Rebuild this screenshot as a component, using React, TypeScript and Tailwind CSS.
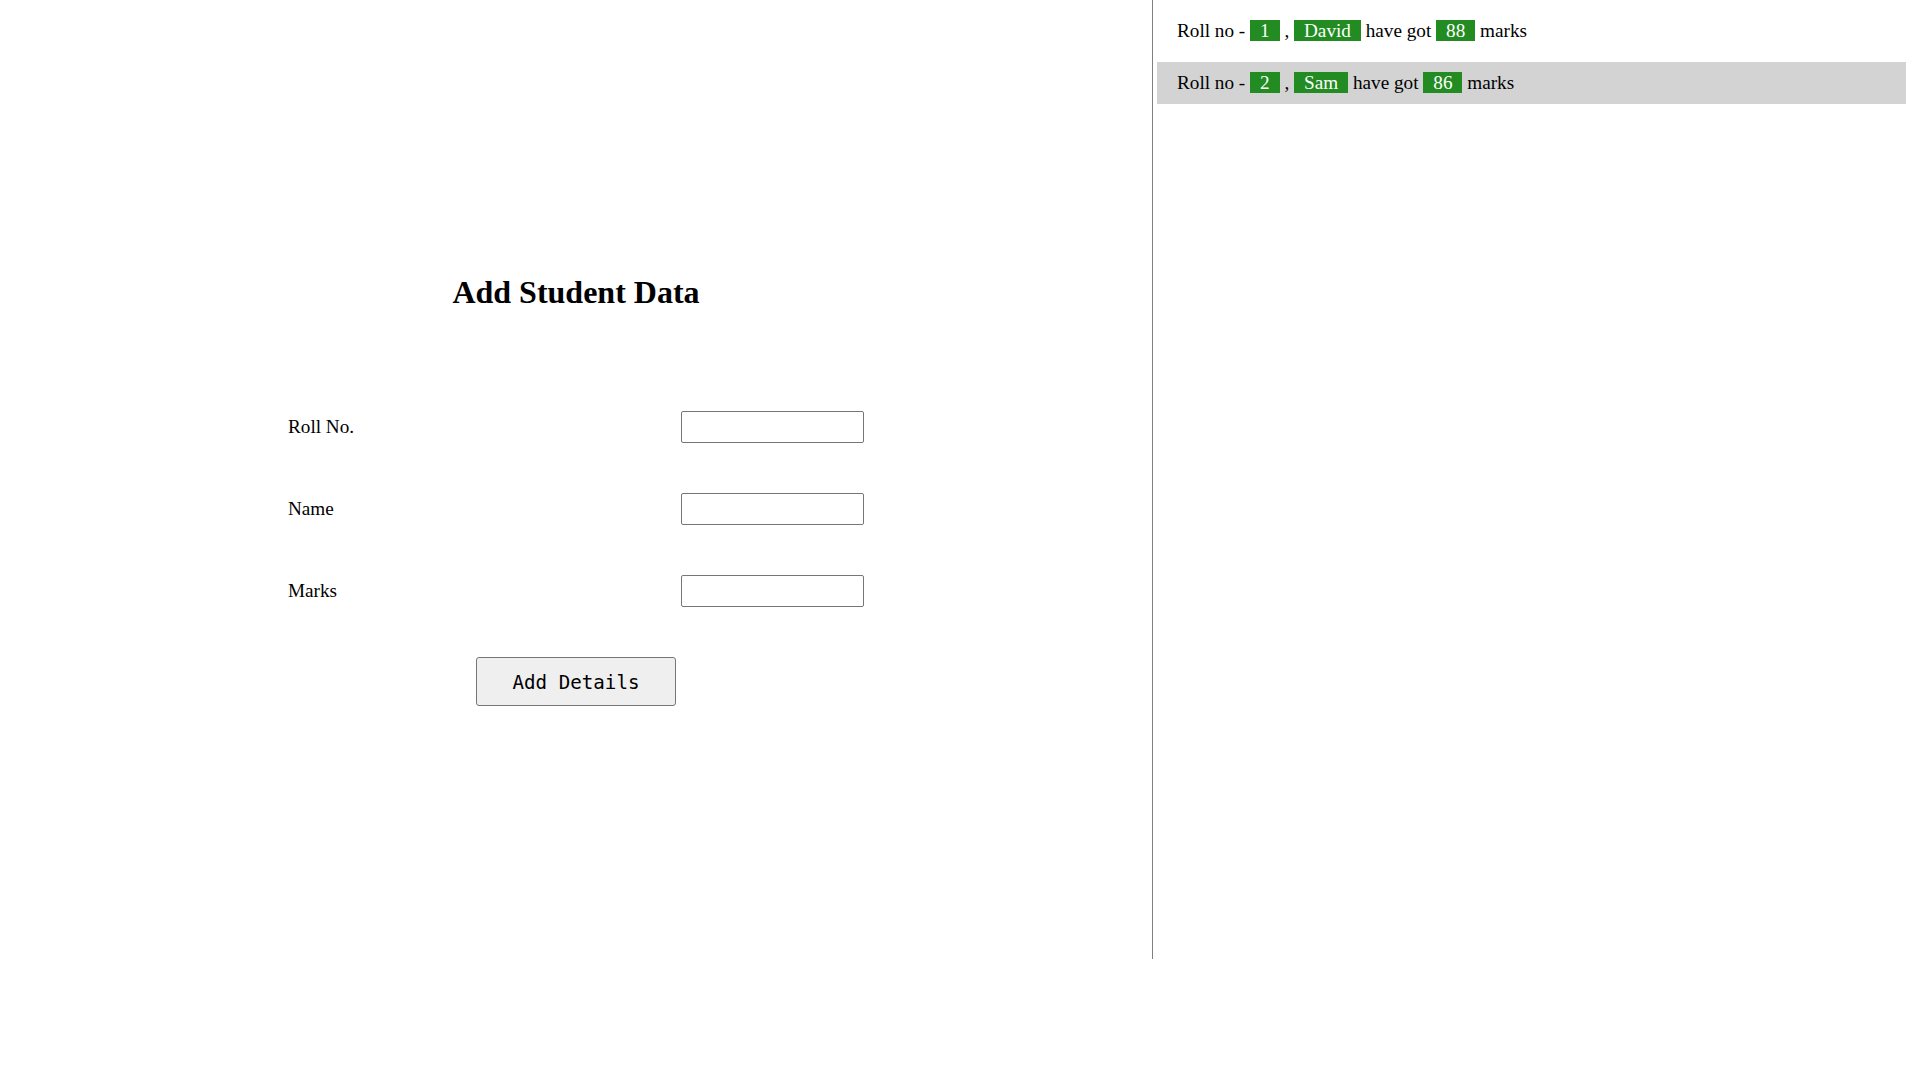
export default function App() {
  const students = [
    { roll: 1, name: "David", marks: 88 },
    { roll: 2, name: "Sam", marks: 86 },
  ];
  const fields = ["Roll No.", "Name", "Marks"];
  return (
    <div className="flex w-full h-screen bg-white text-black font-['Liberation_Serif',serif]">
      <div className="w-[1153px] h-[959px] shrink-0 border-r border-[#808080] flex flex-col items-center pt-[274px]">
        <h1 className="text-[32px] font-bold leading-[37px]">Add Student Data</h1>
        <form className="w-[576px] mt-[100px] flex flex-col gap-[50px]">
          {fields.map((f) => (
            <div key={f} className="flex items-center h-[32px]">
              <label className="w-[393px] text-[19.2px] leading-[22px]">{f}</label>
              <input
                type="text"
                className="w-[183px] h-[32px] border border-[#767676] rounded-[2px] bg-white outline-none"
              />
            </div>
          ))}
        </form>
        <button
          type="button"
          className="mt-[50px] w-[200px] h-[49px] pt-[4px] bg-[#efefef] border border-[#767676] rounded-[3px] font-['DejaVu_Sans_Mono',monospace] text-[19.2px] text-black"
        >
          Add Details
        </button>
      </div>
      <div className="flex-1 pt-[10px] pl-[4px] flex flex-col gap-[10px]">
        {students.map((s, i) => (
          <div
            key={s.roll}
            className={`w-[749px] pl-[20px] py-[10px] text-[19.2px] leading-[22px] whitespace-pre ${
              i === 1 ? "bg-[#d3d3d3]" : "bg-white"
            }`}
          >
            {"Roll no - "}
            <span className="bg-[#228b22] text-white px-[10px]">{s.roll}</span>
            {" , "}
            <span className="bg-[#228b22] text-white px-[10px]">{s.name}</span>
            {" have got "}
            <span className="bg-[#228b22] text-white px-[10px]">{s.marks}</span>
            {" marks"}
          </div>
        ))}
      </div>
    </div>
  );
}
